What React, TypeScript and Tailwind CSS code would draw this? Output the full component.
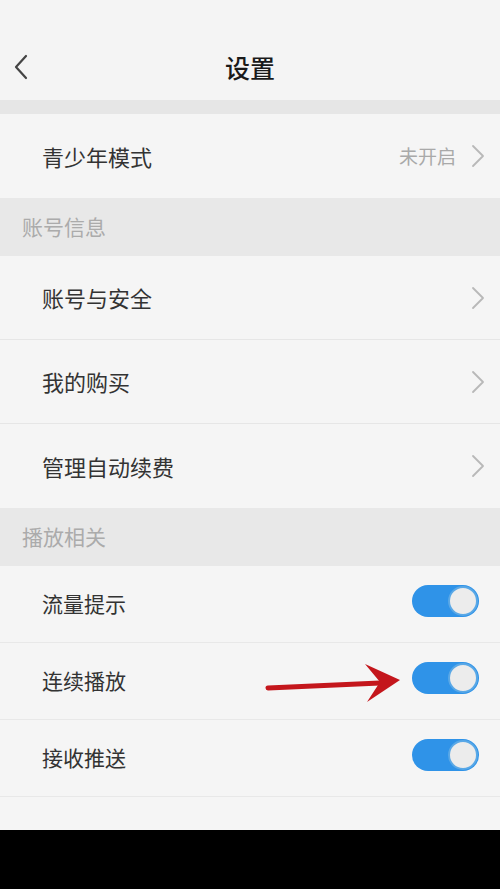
import type { ReactNode } from "react";

const font = { fontFamily: '"Noto Sans CJK SC", "Noto Sans", sans-serif' };

function Chevron() {
  return (
    <svg width="14" height="24" viewBox="0 0 14 24" fill="none" className="shrink-0">
      <path d="M2 2 L12 12 L2 22" stroke="#b8b8b8" strokeWidth="1.8" strokeLinecap="round" strokeLinejoin="round" />
    </svg>
  );
}

function Toggle() {
  return (
    <div className="mb-[6px] flex h-[32px] w-[67px] items-center justify-end rounded-full bg-[#2f93e8] p-[1px]">
      <div className="h-[30px] w-[30px] rounded-full border-2 border-[#5aa8e6] bg-[#ececec]" />
    </div>
  );
}

function Section({ title }: { title: string }) {
  return (
    <div className="flex h-[58px] items-center bg-[#e8e8e8] pl-[22px] text-[21px] text-[#ababab]">{title}</div>
  );
}

function LinkRow({ label, value, last }: { label: string; value?: string; last?: boolean }) {
  return (
    <div className={"flex h-[84px] items-center pl-[42px] pr-[15px] " + (last ? "" : "border-b border-[#e6e6e6]")}>
      <span className="flex-1 text-[22px] text-[#333333]">{label}</span>
      {value && <span className="mr-[15px] text-[19px] text-[#a9a9a9]">{value}</span>}
      <Chevron />
    </div>
  );
}

function ToggleRow({ label, children }: { label: string; children?: ReactNode }) {
  return (
    <div className="relative flex h-[77px] items-center border-b border-[#e8e8e8] pl-[42px] pr-[21px]">
      <span className="flex-1 text-[21px] text-[#333333]">{label}</span>
      {children}
      <Toggle />
    </div>
  );
}

function RedArrow() {
  return (
    <svg className="absolute left-[262px] top-[20px]" width="142" height="42" viewBox="0 0 142 42" fill="none">
      <path d="M6 25 L118 20" stroke="#c4161c" strokeWidth="5" strokeLinecap="round" />
      <path d="M103 1 L138 17 L105 39 L118 19 Z" fill="#c4161c" />
    </svg>
  );
}

export default function App() {
  return (
    <div className="flex h-[889px] w-[500px] flex-col bg-[#f5f5f5]" style={font}>
      <div className="relative flex h-[100px] items-center justify-center bg-[#f4f4f4] pt-[36px]">
        <svg className="absolute left-[12px] top-[54px]" width="18" height="26" viewBox="0 0 18 26" fill="none">
          <path d="M14 2 L4 13 L14 24" stroke="#444" strokeWidth="2.2" strokeLinecap="round" strokeLinejoin="round" />
        </svg>
        <span className="text-[25px] font-medium text-[#1a1a1a]">设置</span>
      </div>
      <div className="h-[14px] bg-[#e6e6e6]" />
      <LinkRow label="青少年模式" value="未开启" last />
      <Section title="账号信息" />
      <LinkRow label="账号与安全" />
      <LinkRow label="我的购买" />
      <LinkRow label="管理自动续费" last />
      <Section title="播放相关" />
      <ToggleRow label="流量提示" />
      <ToggleRow label="连续播放">
        <RedArrow />
      </ToggleRow>
      <ToggleRow label="接收推送" />
      <div className="flex-1" />
      <div className="h-[59px] bg-black" />
    </div>
  );
}
